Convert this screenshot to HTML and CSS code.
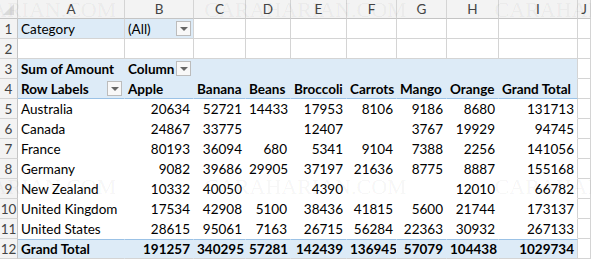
FILE: index.html
```html
<!DOCTYPE html>
<html lang="en">
<head>
    <meta charset="UTF-8">
    <title>Pivot Table</title>
    <link rel="stylesheet" href="styles.css">
</head>
<body>
<div class="sheet">
    <div class="row cols">
        <div class="corner"><span class="tri"></span></div>
        <div>A</div><div>B</div><div>C</div><div>D</div><div>E</div>
        <div>F</div><div>G</div><div>H</div><div>I</div><div>J</div>
    </div>

    <div class="row">
        <div class="rn">1</div>
        <div class="pf">Category</div>
        <div class="pf dd"><span>(All)</span><span class="btn"><i></i></span></div>
        <div></div><div></div><div></div><div></div><div></div><div></div><div></div><div></div>
    </div>

    <div class="row">
        <div class="rn">2</div>
        <div></div><div></div><div></div><div></div><div></div><div></div><div></div><div></div><div></div><div></div>
    </div>

    <div class="row">
        <div class="rn">3</div>
        <div class="ph b">Sum of Amount</div>
        <div class="ph b dd"><span>Column</span><span class="btn"><i></i></span></div>
        <div class="ph"></div><div class="ph"></div><div class="ph"></div><div class="ph"></div>
        <div class="ph"></div><div class="ph"></div><div class="ph end"></div>
        <div></div>
    </div>

    <div class="row">
        <div class="rn">4</div>
        <div class="ph hl b dd"><span>Row Labels</span><span class="btn"><i></i></span></div>
        <div class="ph hl b">Apple</div>
        <div class="ph hl b">Banana</div>
        <div class="ph hl b">Beans</div>
        <div class="ph hl b">Broccoli</div>
        <div class="ph hl b">Carrots</div>
        <div class="ph hl b">Mango</div>
        <div class="ph hl b">Orange</div>
        <div class="ph hl b end">Grand Total</div>
        <div></div>
    </div>

    <div class="row">
        <div class="rn">5</div>
        <div class="pd">Australia</div>
        <div class="pd n">20634</div><div class="pd n">52721</div><div class="pd n">14433</div><div class="pd n">17953</div>
        <div class="pd n">8106</div><div class="pd n">9186</div><div class="pd n">8680</div><div class="pd n end">131713</div>
        <div></div>
    </div>

    <div class="row">
        <div class="rn">6</div>
        <div class="pd">Canada</div>
        <div class="pd n">24867</div><div class="pd n">33775</div><div class="pd n"></div><div class="pd n">12407</div>
        <div class="pd n"></div><div class="pd n">3767</div><div class="pd n">19929</div><div class="pd n end">94745</div>
        <div></div>
    </div>

    <div class="row">
        <div class="rn">7</div>
        <div class="pd">France</div>
        <div class="pd n">80193</div><div class="pd n">36094</div><div class="pd n">680</div><div class="pd n">5341</div>
        <div class="pd n">9104</div><div class="pd n">7388</div><div class="pd n">2256</div><div class="pd n end">141056</div>
        <div></div>
    </div>

    <div class="row">
        <div class="rn">8</div>
        <div class="pd">Germany</div>
        <div class="pd n">9082</div><div class="pd n">39686</div><div class="pd n">29905</div><div class="pd n">37197</div>
        <div class="pd n">21636</div><div class="pd n">8775</div><div class="pd n">8887</div><div class="pd n end">155168</div>
        <div></div>
    </div>

    <div class="row">
        <div class="rn">9</div>
        <div class="pd">New Zealand</div>
        <div class="pd n">10332</div><div class="pd n">40050</div><div class="pd n"></div><div class="pd n">4390</div>
        <div class="pd n"></div><div class="pd n"></div><div class="pd n">12010</div><div class="pd n end">66782</div>
        <div></div>
    </div>

    <div class="row">
        <div class="rn">10</div>
        <div class="pd">United Kingdom</div>
        <div class="pd n">17534</div><div class="pd n">42908</div><div class="pd n">5100</div><div class="pd n">38436</div>
        <div class="pd n">41815</div><div class="pd n">5600</div><div class="pd n">21744</div><div class="pd n end">173137</div>
        <div></div>
    </div>

    <div class="row">
        <div class="rn">11</div>
        <div class="pd">United States</div>
        <div class="pd n">28615</div><div class="pd n">95061</div><div class="pd n">7163</div><div class="pd n">26715</div>
        <div class="pd n">56284</div><div class="pd n">22363</div><div class="pd n">30932</div><div class="pd n end">267133</div>
        <div></div>
    </div>

    <div class="row">
        <div class="rn">12</div>
        <div class="gt b">Grand Total</div>
        <div class="gt b n">191257</div><div class="gt b n">340295</div><div class="gt b n">57281</div><div class="gt b n">142439</div>
        <div class="gt b n">136945</div><div class="gt b n">57079</div><div class="gt b n">104438</div><div class="gt b n end">1029734</div>
        <div></div>
    </div>

    <!-- faint watermark over the sheet -->
    <div class="wm top"><span>CARAHARIAN.COM</span><span>CARAHARIAN.COM</span><span>CARAHARIAN.COM</span></div>
    <div class="wm mid"><span>CARAHARIAN.COM</span><span>CARAHARIAN.COM</span><span>CARAHARIAN.COM</span></div>
</div>
</body>
</html>
```

FILE: styles.css
```css
body {
    margin: 0;
    background: #fff;
    color: #000;
    font-family: Lato, "Liberation Sans", sans-serif;
    font-size: 13.5px;
}
.sheet {
    position: relative;
    width: 591px;
    height: 260px;
    overflow: hidden;
}
.row {
    display: grid;
    grid-template-columns: 18px 107px 69px 52px 45px 56px 50px 50px 52px 79px 13px;
    height: 20px;
}
.row > div {
    box-sizing: border-box;
    padding: 0 3px;
    line-height: 20px;
    white-space: nowrap;
    overflow: hidden;
    border-right: 1px solid #d4d4d4;
    border-bottom: 1px solid #d4d4d4;
}

/* column letters */
.cols {
    height: 19px;
}
.cols > div {
    background: #f3f3f3;
    color: #444;
    text-align: center;
    line-height: 18px;
    border-bottom-color: #c4c4c4;
}
.cols > div:last-child {
    padding: 0;
}
.row > .corner {
    padding: 0;
    position: relative;
}
.tri {
    position: absolute;
    right: 3px;
    bottom: 3px;
    width: 0;
    height: 0;
    border-left: 11px solid transparent;
    border-bottom: 11px solid #dadada;
}

/* row numbers */
.row > .rn {
    background: #f3f3f3;
    color: #444;
    text-align: center;
    padding: 0;
    border-right-color: #c4c4c4;
}

/* pivot parts */
.row > .pf {
    background: #ddebf7;
}
.row > .ph {
    background: #ddebf7;
    border-right-color: transparent;
    border-bottom-color: transparent;
}
.row > .hl {
    border-bottom-color: #9bc2e6;
}
.row > .pd {
    border-right-color: transparent;
    border-bottom-color: transparent;
}
.row > .gt {
    background: #ddebf7;
    border-top: 1px solid #9bc2e6;
    border-right-color: transparent;
    line-height: 18px;
}
.row > .end {
    border-right-color: #d4d4d4;
}
.b {
    font-weight: bold;
}
.n {
    text-align: right;
}

/* filter dropdowns */
.row > .dd {
    display: flex;
    align-items: center;
    justify-content: space-between;
    padding-right: 2px;
}
.btn {
    flex: none;
    width: 15px;
    height: 15px;
    box-sizing: border-box;
    border: 1px solid #bcbcbc;
    background: #f8f8f8;
    display: flex;
    align-items: center;
    justify-content: center;
}
.btn i {
    width: 0;
    height: 0;
    border-left: 4px solid transparent;
    border-right: 4px solid transparent;
    border-top: 4px solid #666;
}

/* watermark */
.wm {
    position: absolute;
    left: -86px;
    display: flex;
    gap: 88px;
    font-family: "Liberation Serif", serif;
    font-size: 22px;
    line-height: 20px;
    color: rgba(0, 0, 0, 0.05);
    white-space: nowrap;
    pointer-events: none;
}
.wm.top {
    top: 0;
}
.wm.mid {
    top: 177px;
}
```
